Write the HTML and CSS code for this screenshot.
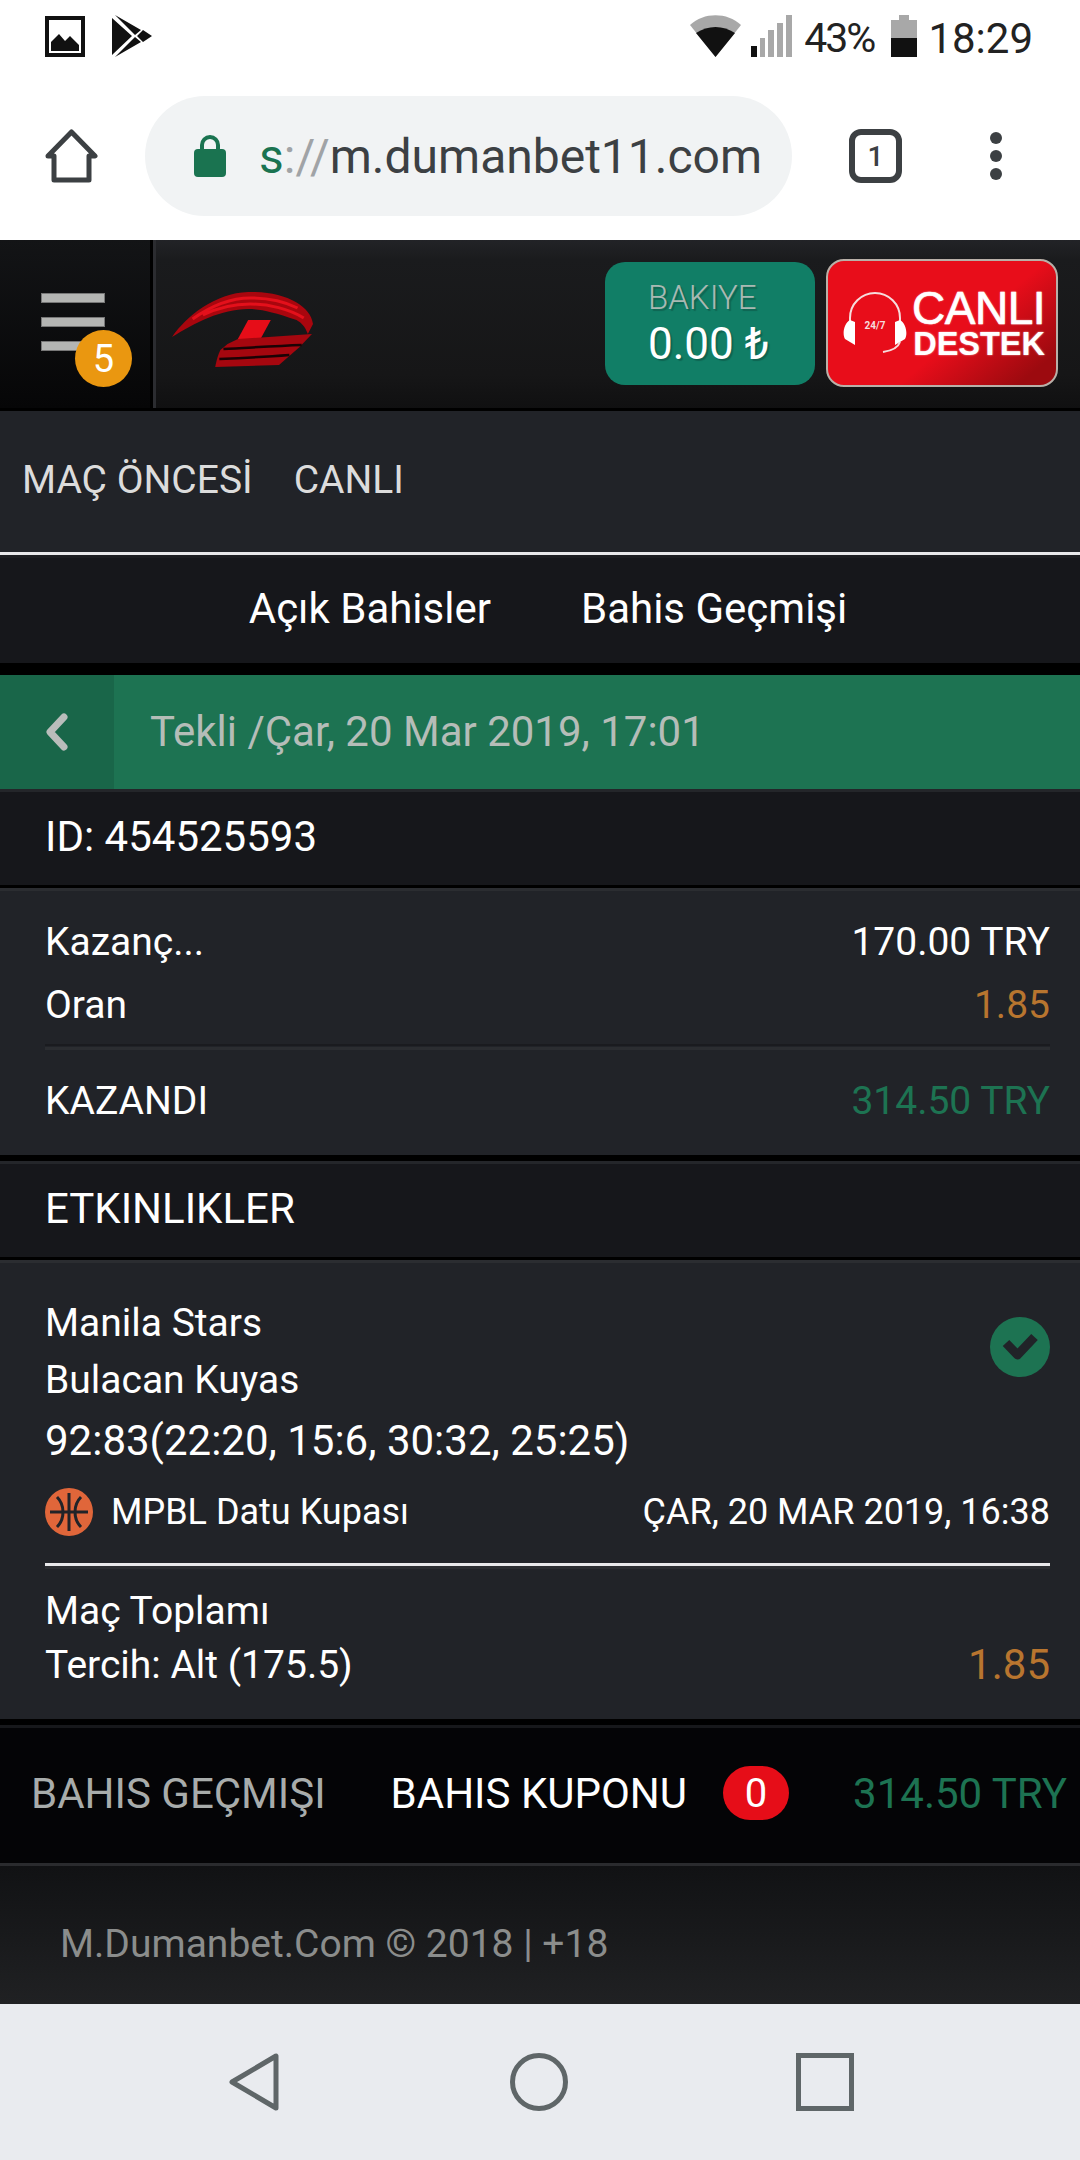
FILE: index.html
```html
<!DOCTYPE html>
<html lang="tr">
<head>
<meta charset="utf-8">
<title>Dumanbet</title>
<link rel="stylesheet" href="styles.css">
</head>
<body>
<div class="status">
  <div class="status-left">
    <svg width="40" height="42" viewBox="0 0 40 42"><path d="M2 3h36v37H2z" fill="#fff" stroke="#111" stroke-width="4"/><path d="M6 36V27l8-8 6 7 5-5 9 9v6z" fill="#111"/></svg>
    <svg width="40" height="42" viewBox="0 0 40 42"><path d="M3 0l26 15-6 5z M0 3l20 18L0 40z M3 42l26-15-6-5z M31 15l9 6-9 6-6-6z" fill="#111"/></svg>
  </div>
  <div class="status-right">
    <svg class="ic-wifi" width="51" height="42" viewBox="0 0 51 42"><path d="M0 10C14-3 37-3 51 10L25.5 42z" fill="#a8a8a8"/><path d="M6 18c12-8 27-8 39 0L25.5 42z" fill="#111"/></svg>
    <svg class="ic-signal" width="41" height="42" viewBox="0 0 41 42"><rect x="0" y="31" width="6" height="11" fill="#111"/><rect x="9" y="23" width="5" height="19" fill="#a8a8a8"/><rect x="17" y="15" width="6" height="27" fill="#a8a8a8"/><rect x="26" y="8" width="6" height="34" fill="#a8a8a8"/><rect x="35" y="0" width="6" height="42" fill="#a8a8a8"/></svg>
    <span class="pct">43%</span>
    <svg class="ic-batt" width="26" height="42" viewBox="0 0 26 42"><path d="M8 0h10v5h8v18H0V5h8z" fill="#a8a8a8"/><rect y="23" width="26" height="19" fill="#111"/></svg>
    <span class="clock">18:29</span>
  </div>
</div>
<div class="browser">
  <svg class="ic-home" width="53" height="54" viewBox="0 0 53 54"><path d="M3 27L26.500 3 50 27h-6v24H9V27z" fill="#fff" stroke="#3c4043" stroke-width="5" stroke-linejoin="round"/></svg>
  <div class="url">
    <svg class="ic-lock" width="32" height="42" viewBox="0 0 32 42"><path d="M8 16V10a8 8 0 0 1 16 0v6" fill="none" stroke="#1a7350" stroke-width="4"/><rect x="0" y="14" width="32" height="28" rx="4" fill="#1a7350"/></svg>
    <span class="url-text"><span class="url-s">s</span><span class="url-sep">://</span>m.dumanbet11.com</span>
  </div>
  <div class="tabs-count">1</div>
  <div class="kebab"><i></i><i></i><i></i></div>
</div>
<header class="site-head">
  <div class="menu">
    <div class="burger"><i></i><i></i><i></i></div>
    <span class="badge">5</span>
  </div>
  <div class="logo-cell">
    <svg class="logo" width="141" height="75" viewBox="0 0 137 75" preserveAspectRatio="none">
      <path d="M0 45C14 24 42 1 74 0c36-1 61 14 63 32l-5 10c-3-8-6-11-11-14C98 20 86 17 74 17 48 17 22 31 0 45z" fill="#a8060e"/>
      <path d="M20 27C42 11 60 6 76 6c16 0 32 3 46 10M30 23C48 14 62 12 76 12c18 0 38 5 52 14" fill="none" stroke="#e4101b" stroke-width="3"/>
      <path d="M74 28h22L86 47H64z" fill="#e60d18"/>
      <path d="M54 52l10-5 72-5-12 13-20 18-62 2c1-6 3-13 5-17z" fill="#a5070f"/>
      <path d="M50 57c22-1 48-3 76-4M46 67c24-1 44-2 68-4" fill="none" stroke="#1b0305" stroke-width="2.500"/>
    </svg>
  </div>
  <div class="head-actions">
    <div class="balance">
      <span class="bal-label">BAKIYE</span>
      <span class="bal-value">0.00 ₺</span>
    </div>
    <div class="support">
      <svg class="headset" width="64" height="62" viewBox="0 0 64 62">
        <path d="M7 30V26a25 25 0 0 1 50 0v4" fill="none" stroke="#f6dcdc" stroke-width="2"/>
        <path d="M7 28c-6 3-8 14-5 19l10 6V30zM57 28c6 3 8 14 5 19l-10 6V30z" fill="#fff"/>
        <path d="M57 50c-2 6-10 9-17 10" fill="none" stroke="#f6dcdc" stroke-width="2"/>
        <text x="32" y="37" class="headset-text">24/7</text>
      </svg>
      <div class="support-text"><span class="s1">CANLI</span><span class="s2">DESTEK</span></div>
    </div>
  </div>
</header>
<nav class="main-nav"><span>MAÇ ÖNCESİ</span><span>CANLI</span></nav>
<div class="sub-tabs"><span>Açık Bahisler</span><span>Bahis Geçmişi</span></div>
<div class="title-bar">
  <div class="back"><svg width="24" height="40" viewBox="0 0 24 40"><path d="M19 5L5 20l14 15" fill="none" stroke="#b9bdbb" stroke-width="7" stroke-linecap="round" stroke-linejoin="round"/></svg></div>
  <span class="title-text">Tekli /Çar, 20 Mar 2019, 17:01</span>
</div>
<div class="id-row">ID: 454525593</div>
<section class="summary">
  <div class="sum-line"><span>Kazanç...</span><span>170.00 TRY</span></div>
  <div class="sum-line odds-line"><span>Oran</span><span class="orange">1.85</span></div>
  <div class="sum-rule"></div>
  <div class="sum-line won-line"><span>KAZANDI</span><span class="green">314.50 TRY</span></div>
</section>
<div class="events-head">ETKINLIKLER</div>
<section class="event">
  <div class="teams">
    <div class="team-text">
      <div class="t1">Manila Stars</div>
      <div class="t2">Bulacan Kuyas</div>
      <div class="t3">92:83(22:20, 15:6, 30:32, 25:25)</div>
    </div>
    <svg class="check" width="60" height="60" viewBox="0 0 60 60"><circle cx="30" cy="30" r="30" fill="#1d7352"/><path d="M16 26l11.500 12L44.500 20" fill="none" stroke="#212328" stroke-width="9" stroke-linejoin="round"/></svg>
  </div>
  <div class="league-row">
    <div class="league">
      <svg class="ball" width="48" height="48" viewBox="0 0 48 48"><circle cx="24" cy="24" r="24" fill="#e0663a"/><path d="M24 5v38M5 24h38M12 9c8 8 8 22 0 30M36 9c-8 8-8 22 0 30" fill="none" stroke="#212328" stroke-width="3"/></svg>
      <span>MPBL Datu Kupası</span>
    </div>
    <span>ÇAR, 20 MAR 2019, 16:38</span>
  </div>
  <div class="market">
    <div>
      <div class="m1">Maç Toplamı</div>
      <div class="m2">Tercih: Alt (175.5)</div>
    </div>
    <span class="orange m-odds">1.85</span>
  </div>
</section>
<div class="bottom-bar">
  <span class="bb-hist">BAHIS GEÇMIŞI</span>
  <span class="bb-slip">BAHIS KUPONU</span>
  <span class="bb-count">0</span>
  <span class="bb-total">314.50 TRY</span>
</div>
<footer class="site-foot">M.Dumanbet.Com © 2018 | +18</footer>
<div class="android-nav">
  <svg width="50" height="58" viewBox="0 0 50 58"><path d="M47 3v52L3 29z" fill="none" stroke="#5f6668" stroke-width="5" stroke-linejoin="round"/></svg>
  <svg width="58" height="58" viewBox="0 0 58 58"><circle cx="29" cy="29" r="26.500" fill="none" stroke="#5f6668" stroke-width="5"/></svg>
  <svg width="58" height="58" viewBox="0 0 58 58"><rect x="2.500" y="2.500" width="53" height="53" fill="none" stroke="#5f6668" stroke-width="5"/></svg>
</div>
</body>
</html>
```
FILE: styles.css
```css
* { box-sizing: border-box; }
html, body { margin: 0; padding: 0; }
body {
  width: 1080px;
  height: 2160px;
  overflow: hidden;
  background: #000;
  font-family: Roboto, "Liberation Sans", sans-serif;
  color: #fff;
  display: flex;
  flex-direction: column;
}

/* Android status bar */
.status {
  height: 72px;
  background: #fff;
  display: flex;
  justify-content: space-between;
  align-items: flex-start;
  padding: 15px 47px 0 45px;
  flex: none;
}
.status-left { display: flex; gap: 27px; align-items: flex-start; }
.status-right { display: flex; align-items: center; color: #222; height: 42px; }
.ic-wifi { margin-right: 10px; }
.ic-signal { margin-right: 12px; }
.pct { font-size: 41px; letter-spacing: -2px; margin-right: 17px; padding-top: 4px; }
.ic-batt { margin-right: 11px; }
.clock { font-size: 42px; padding-top: 4px; }

/* Chrome toolbar */
.browser {
  height: 168px;
  background: #fff;
  display: flex;
  align-items: center;
  flex: none;
  padding-left: 45px;
}
.ic-home { margin-right: 47px; flex: none; }
.url {
  width: 647px;
  height: 120px;
  border-radius: 60px;
  background: #f1f3f4;
  display: flex;
  align-items: center;
  padding-left: 49px;
  flex: none;
}
.ic-lock { margin-right: 33px; flex: none; }
.url-text { font-size: 48px; color: #3c4043; white-space: nowrap; }
.url-s { color: #1a7350; }
.url-sep { color: #a0a3a6; }
.tabs-count {
  width: 53px;
  height: 54px;
  margin-left: 57px;
  border: 6px solid #3c4043;
  border-radius: 12px;
  color: #3c4043;
  font-size: 28px;
  font-weight: 500;
  display: flex;
  align-items: center;
  justify-content: center;
  flex: none;
}
.kebab { margin-left: 88px; display: flex; flex-direction: column; gap: 6px; flex: none; }
.kebab i { width: 12px; height: 12px; border-radius: 50%; background: #3c4043; display: block; }

/* Site header */
.site-head {
  height: 171px;
  flex: none;
  display: flex;
  background: linear-gradient(#222327, #1a1b1d 12%, #161617 80%, #101011);
  border-bottom: 3px solid #000;
}
.menu {
  width: 153px;
  flex: none;
  position: relative;
  background: linear-gradient(#131416, #060607);
  padding: 53px 0 0 41px;
  border-right: 3px solid #000;
}
.burger { display: flex; flex-direction: column; gap: 14px; }
.burger i { display: block; width: 64px; height: 10px; background: #b4b5b3; border: 1px solid #777; }
.badge {
  position: absolute;
  left: 75px;
  top: 90px;
  width: 57px;
  height: 57px;
  border-radius: 50%;
  background: #ea9710;
  color: #fff;
  font-size: 38px;
  display: flex;
  align-items: center;
  justify-content: center;
}
.logo-cell {
  flex: 1;
  border-left: 3px solid #2b2c30;
  padding: 52px 0 0 16px;
}
.logo { display: block; }
.head-actions { display: flex; gap: 11px; padding: 22px 22px 0 0; align-items: flex-start; }
.balance {
  width: 210px;
  height: 123px;
  background: #117e66;
  border-radius: 20px;
  padding: 17px 0 0 43px;
  display: flex;
  flex-direction: column;
  text-shadow: 2px 2px 1px rgba(0,0,0,.2);
}
.bal-label { font-size: 33px; line-height: 38px; color: #a9b9b3; font-weight: 300; }
.bal-value { font-size: 44px; line-height: 50px; color: #fff; margin-top: 2px; }
.support {
  width: 232px;
  height: 128px;
  margin-top: -3px;
  border: 2px solid #b9b0a8;
  border-radius: 18px;
  background: linear-gradient(140deg, #e80d1a 58%, #9c0a0f 90%);
  display: flex;
  align-items: center;
  padding-left: 15px;
}
.headset { flex: none; }
.headset-text { font: 700 10px Roboto, sans-serif; fill: #f6dcdc; text-anchor: middle; }
.support-text { display: flex; flex-direction: column; align-items: flex-end; margin-left: 6px; font-family: "Liberation Sans", Arial, sans-serif; width: 132px; text-shadow: 0 0 2px rgba(255,255,255,.7); }
.s1 { font-size: 46px; line-height: 42px; letter-spacing: -0.5px; -webkit-text-stroke: 0.6px #fff; }
.s2 { font-size: 32.5px; line-height: 30px; font-weight: 700; }

/* Nav */
.main-nav {
  height: 144px;
  flex: none;
  background: #212328;
  border-bottom: 3px solid #e8e8ea;
  display: flex;
  align-items: center;
  gap: 41px;
  padding: 0 0 4px 22px;
  font-size: 39px;
  color: #dcdcdc;
}
.sub-tabs {
  height: 108px;
  flex: none;
  background: #16171b;
  border-top: 3px solid #1c1d21;
  display: flex;
  justify-content: center;
  align-items: center;
  gap: 90px;
  font-size: 42px;
  padding: 0 0 5px 16px;
}

.title-bar {
  height: 114px;
  margin-top: 12px;
  flex: none;
  background: #1d7352;
  display: flex;
  align-items: center;
}
.back { width: 114px; height: 100%; background: #196649; display: flex; align-items: center; justify-content: center; flex: none; }
.title-text { margin-left: 36px; font-size: 42px; color: #b5bdb8; padding-bottom: 2px; }

.id-row {
  height: 96px;
  flex: none;
  background: #16171b;
  border-top: 3px solid #24262a;
  display: flex;
  align-items: center;
  padding: 0 0 5px 45px;
  font-size: 42px;
}

.summary {
  margin-top: 3px;
  height: 267px;
  flex: none;
  background: #212328;
  border-top: 3px solid #2b2d31;
  padding: 26px 30px 0 45px;
  font-size: 39px;
}
.sum-line { display: flex; justify-content: space-between; align-items: center; line-height: 50px; }
.odds-line { margin-top: 13px; }
.sum-rule { margin-top: 14px; height: 6px; border-top: 2px solid #1a1b1f; border-bottom: 3px solid #2b2d31; }
.won-line { margin-top: 26px; }
.orange { color: #b8752f; }
.green { color: #1d7352; }

.events-head {
  margin-top: 6px;
  height: 96px;
  flex: none;
  background: #16171b;
  border-top: 3px solid #24262a;
  display: flex;
  align-items: center;
  padding: 0 0 5px 45px;
  font-size: 42px;
}

.event {
  margin-top: 3px;
  height: 459px;
  flex: none;
  background: #212328;
  border-top: 3px solid #2b2d31;
  padding: 35px 30px 0 45px;
}
.teams { display: flex; justify-content: space-between; align-items: flex-start; }
.team-text { font-size: 39px; }
.t1 { line-height: 50px; }
.t2 { line-height: 50px; margin-top: 7px; }
.t3 { line-height: 50px; margin-top: 11px; font-size: 42px; }
.check { margin-top: 19px; flex: none; }
.league-row {
  display: flex;
  justify-content: space-between;
  align-items: center;
  margin-top: 15px;
  height: 85px;
  padding-bottom: 20px;
  border-bottom: 3px solid #e8e8ea;
  box-shadow: 0 3px 0 #2b2d31;
  font-size: 36px;
}
.league { display: flex; align-items: center; gap: 18px; }
.ball { flex: none; }
.market { display: flex; justify-content: space-between; align-items: flex-end; margin-top: 23px; font-size: 39px; }
.m1 { line-height: 44px; }
.m2 { line-height: 44px; margin-top: 10px; }
.m-odds { font-size: 42px; line-height: 44px; }

.bottom-bar {
  margin-top: 6px;
  height: 141px;
  flex: none;
  background: #040406;
  border-top: 3px solid #17181b;
  border-bottom: 3px solid #2a2b2e;
  display: flex;
  align-items: center;
  padding: 0 0 5px 31px;
  font-size: 42px;
  white-space: nowrap;
}
.bb-hist { color: #a8acab; }
.bb-slip { margin-left: 65px; }
.bb-count {
  margin-left: 36px;
  width: 66px;
  height: 54px;
  border-radius: 27px;
  background: #e60d18;
  display: flex;
  align-items: center;
  justify-content: center;
  font-size: 40px;
  flex: none;
}
.bb-total { margin-left: 64px; color: #1d7352; }

.site-foot {
  height: 138px;
  flex: none;
  background: linear-gradient(#111214, #202123);
  display: flex;
  align-items: center;
  padding: 18px 0 0 60px;
  font-size: 39px;
  color: #8b8d8c;
}
.android-nav {
  height: 156px;
  flex: none;
  background: #e9ebef;
  display: flex;
  align-items: center;
  padding-left: 229px;
}
.android-nav svg:nth-child(2) { margin-left: 231px; }
.android-nav svg:nth-child(3) { margin-left: 228px; }
```
